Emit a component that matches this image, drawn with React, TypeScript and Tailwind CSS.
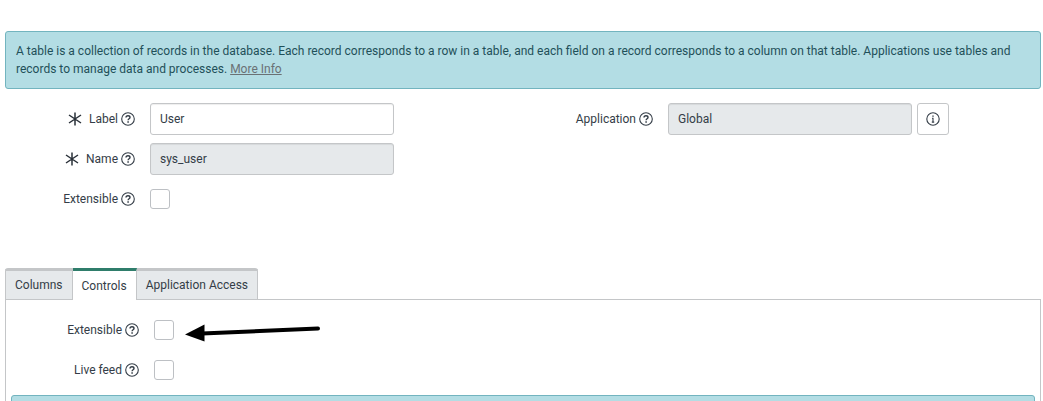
import type { ReactNode } from 'react';

function HelpIcon() {
  return (
    <svg className="size-[14px] shrink-0" viewBox="0 0 14 14" fill="none" stroke="#343d47" aria-hidden="true">
      <circle cx="7" cy="7" r="6.3" strokeWidth="1.1" />
      <path d="M5 5.6C5 4.4 5.8 3.7 7 3.7s2 .7 2 1.7c0 1.3-1.9 1.4-1.9 2.8" strokeWidth="1.4" />
      <path d="M7.1 9.2v1.5" strokeWidth="1.5" />
    </svg>
  );
}

function InfoIcon() {
  return (
    <svg className="size-[14px]" viewBox="0 0 14 14" fill="none" stroke="#343d47" aria-hidden="true">
      <circle cx="7" cy="7" r="6.2" strokeWidth="1.1" />
      <path d="M7 3.4v1.4" strokeWidth="1.4" />
      <path d="M6 6.2h1v4M5.8 10.1h2.4" strokeWidth="1.1" />
    </svg>
  );
}

function RequiredIcon() {
  return (
    <svg className="mr-[7px] size-[14px] shrink-0" viewBox="0 0 14 14" fill="none" stroke="#293038" aria-hidden="true">
      <path d="M7 .5v13M1 3l12 8M13 3 1 11" strokeWidth="1.5" />
    </svg>
  );
}

interface FieldProps {
  id: string;
  label: string;
  required?: boolean;
  labelWidth?: string;
  children: ReactNode;
}

function Field({ id, label, required, labelWidth = 'w-[130px]', children }: FieldProps) {
  return (
    <div className="flex min-h-8 items-center gap-[15px]">
      <label htmlFor={id} className={`flex shrink-0 items-center justify-end ${labelWidth}`}>
        {required && <RequiredIcon />}
        <span className="mr-[3px]">{label}</span>
        <HelpIcon />
      </label>
      {children}
    </div>
  );
}

const inputClass =
  'h-8 w-full min-w-0 flex-1 rounded-[3px] border border-[#c4c6c8] px-[9px] text-[#343d47] shadow-[inset_0_1px_1px_rgba(0,0,0,0.07)]';
const readOnlyClass = `${inputClass} bg-[#e6e9eb] text-[#4c5157]`;
const checkboxClass = 'size-5 shrink-0 appearance-none rounded-[3px] border border-[#bdc0c4] bg-white';
const alertClass = 'rounded-[3px] border border-[#72b4bf] bg-[#b3dde4] p-[10px] text-[#1f5059]';

const tabs = ['Columns', 'Controls', 'Application Access'];

export default function App() {
  return (
    <main className="h-screen overflow-hidden bg-white pt-[31px] pr-[2px] pl-[5px] font-['Roboto','Noto_Sans',sans-serif] text-[12px] leading-[18px] text-[#343d47]">
      <div className={alertClass}>
        A table is a collection of records in the database. Each record corresponds to a row in a table, and each
        field on a record corresponds to a column on that table. Applications use tables and records to manage data
        and processes.{' '}
        <a href="#more-info" className="text-[#6a7175] underline">
          More Info
        </a>
      </div>

      <form className="mt-[14px] grid grid-cols-2">
        <div className="flex flex-col gap-2 pr-[129px]">
          <Field id="label" label="Label" required>
            <input id="label" type="text" defaultValue="User" className={inputClass} />
          </Field>
          <Field id="name" label="Name" required>
            <input id="name" type="text" value="sys_user" readOnly className={readOnlyClass} />
          </Field>
          <Field id="extensible" label="Extensible">
            <input id="extensible" type="checkbox" className={checkboxClass} />
          </Field>
        </div>
        <div className="pr-[92px]">
          <Field id="application" label="Application">
            <div className="flex flex-1 gap-[5px]">
              <input id="application" type="text" value="Global" readOnly className={readOnlyClass} />
              <button
                type="button"
                aria-label="Preview record"
                className="flex size-8 items-center justify-center rounded-[3px] border border-[#c4c6c8] bg-white"
              >
                <InfoIcon />
              </button>
            </div>
          </Field>
        </div>
      </form>

      <section className="mt-[53px]">
        <div role="tablist" className="flex">
          {tabs.map((tab) => (
            <button
              key={tab}
              type="button"
              role="tab"
              aria-selected={tab === 'Controls'}
              className="h-[31px] border-t-[3px] border-r border-[#c4c6c8] bg-[#e6e9eb] px-[9px] first:rounded-tl-[3px] first:border-l last:rounded-tr-[3px] aria-selected:z-10 aria-selected:-mb-px aria-selected:h-8 aria-selected:border-t-[#2f7d6b] aria-selected:bg-white"
            >
              {tab}
            </button>
          ))}
        </div>
        <div role="tabpanel" className="border border-[#c4c6c8] px-[5px] pt-[14px]">
          <div className="flex flex-col gap-2">
            <div className="flex items-center">
              <Field id="controls-extensible" label="Extensible" labelWidth="w-[128px]">
                <input id="controls-extensible" type="checkbox" className={checkboxClass} />
              </Field>
              <svg className="ml-[11px] h-6 w-[136px]" viewBox="0 0 136 24" aria-hidden="true">
                <path d="M17 15.5 133 10.5" stroke="#000" strokeWidth="4" strokeLinecap="round" />
                <path d="M0 16.5 19.5 6.5V23.5z" fill="#000" />
              </svg>
            </div>
            <Field id="live-feed" label="Live feed" labelWidth="w-[128px]">
              <input id="live-feed" type="checkbox" className={checkboxClass} />
            </Field>
          </div>
          <div className={`mt-[9px] h-[58px] ${alertClass}`} />
        </div>
      </section>
    </main>
  );
}
